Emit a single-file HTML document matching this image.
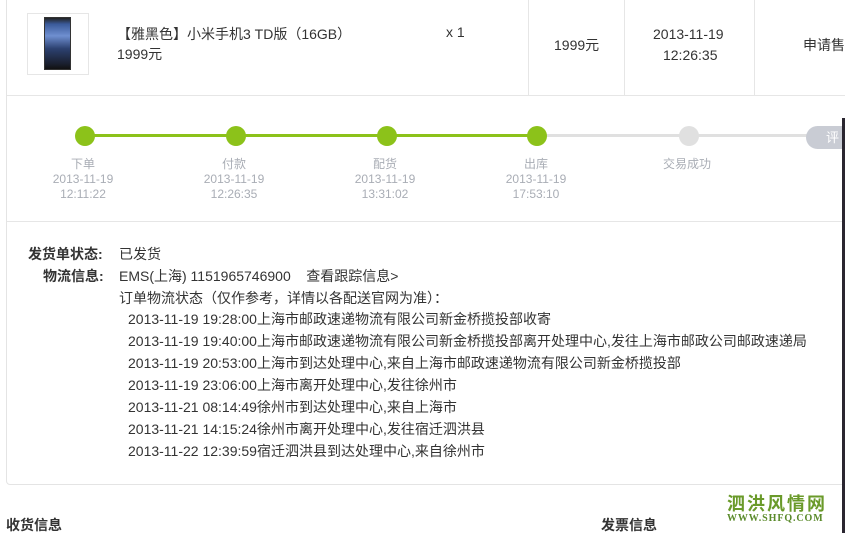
<!DOCTYPE html>
<html><head><meta charset="utf-8"><style>
*{margin:0;padding:0;box-sizing:border-box}
body{width:845px;height:533px;overflow:hidden;background:#fff;font-family:"Liberation Sans","Noto Sans CJK SC",sans-serif;font-size:14px;color:#333;position:relative}
.a{position:absolute;white-space:nowrap}
.panel{position:absolute;left:6px;top:-5px;width:850px;height:490px;border:1px solid #e4e4e4;border-radius:4px}
.hl{position:absolute;height:1px;background:#e6e6e6}
.vl{position:absolute;width:1px;background:#e6e6e6}
.dot{position:absolute;width:20px;height:20px;border-radius:50%;background:#8cc21a}
.tl{position:absolute;text-align:center;color:#a9adb5;font-size:12px;line-height:15px;width:100px}
.log{position:absolute;left:128px;font-size:14px;line-height:22px;color:#333}
</style></head><body>
<div class="panel"></div>
<div class="hl" style="left:7px;top:95px;width:840px"></div>
<div class="hl" style="left:7px;top:221px;width:840px"></div>
<div class="vl" style="left:528px;top:0;height:95px"></div>
<div class="vl" style="left:624px;top:0;height:95px"></div>
<div class="vl" style="left:754px;top:0;height:95px"></div>
<div class="a" style="left:27px;top:13px;width:62px;height:62px;border:1px solid #e6e6e6"></div>
<div class="a" style="left:44px;top:17px;width:27px;height:53px;background:linear-gradient(#222 0,#3a5a9a 12%,#6f8fd0 35%,#2c4170 60%,#1a1f2e 90%,#111);border:1px solid #333"></div>
<div class="a" style="left:117px;top:24px">【雅黑色】小米手机3 TD版（16GB）</div>
<div class="a" style="left:117px;top:44px">1999元</div>
<div class="a" style="left:446px;top:24px">x 1</div>
<div class="a" style="left:554px;top:35px">1999元</div>
<div class="a" style="left:653px;top:24px;text-align:center;line-height:21px">2013-11-19<br>&nbsp;12:26:35</div>
<div class="a" style="left:803px;top:35px">申请售</div>
<div class="a" style="left:85px;top:134px;width:452px;height:3px;background:#8cc21a"></div>
<div class="a" style="left:537px;top:134px;width:280px;height:3px;background:#e0e0e0"></div>
<div class="dot" style="left:75px;top:126px"></div>
<div class="dot" style="left:226px;top:126px"></div>
<div class="dot" style="left:377px;top:126px"></div>
<div class="dot" style="left:527px;top:126px"></div>
<div class="dot" style="left:679px;top:126px;background:#e0e0e0"></div>
<div class="a" style="left:806px;top:126px;width:50px;height:23px;border-radius:12px;background:#c9ccd4;color:#fff;font-size:13px;line-height:23px;padding-left:20px">评</div>
<div class="a" style="left:842px;top:118px;width:3px;height:415px;background:#2a2630"></div>
<div class="tl" style="left:33px;top:157px">下单<br>2013-11-19<br>12:11:22</div>
<div class="tl" style="left:184px;top:157px">付款<br>2013-11-19<br>12:26:35</div>
<div class="tl" style="left:335px;top:157px">配货<br>2013-11-19<br>13:31:02</div>
<div class="tl" style="left:486px;top:157px">出库<br>2013-11-19<br>17:53:10</div>
<div class="tl" style="left:637px;top:157px">交易成功</div>
<div class="a" style="left:28px;top:244px;font-weight:bold">发货单状态:</div>
<div class="a" style="left:119px;top:244px">已发货</div>
<div class="a" style="left:43px;top:266px;font-weight:bold">物流信息:</div>
<div class="a" style="left:119px;top:266px">EMS(上海) 1151965746900 &nbsp;&nbsp; 查看跟踪信息&gt;</div>
<div class="a" style="left:119px;top:288px">订单物流状态（仅作参考，详情以各配送官网为准）：</div>
<div class="log" style="top:308px">2013-11-19 19:28:00上海市邮政速递物流有限公司新金桥揽投部收寄<br>2013-11-19 19:40:00上海市邮政速递物流有限公司新金桥揽投部离开处理中心,发往上海市邮政公司邮政速递局<br>2013-11-19 20:53:00上海市到达处理中心,来自上海市邮政速递物流有限公司新金桥揽投部<br>2013-11-19 23:06:00上海市离开处理中心,发往徐州市<br>2013-11-21 08:14:49徐州市到达处理中心,来自上海市<br>2013-11-21 14:15:24徐州市离开处理中心,发往宿迁泗洪县<br>2013-11-22 12:39:59宿迁泗洪县到达处理中心,来自徐州市</div>
<div class="a" style="left:6px;top:515px;font-size:14px;font-weight:bold">收货信息</div>
<div class="a" style="left:601px;top:515px;font-size:14px;font-weight:bold">发票信息</div>
<div class="a" style="left:727px;top:490px;font-size:18px;font-weight:bold;color:#6a9a2a;letter-spacing:2px;font-family:'Noto Sans CJK SC',sans-serif">泗洪风情网</div>
<div class="a" style="left:727px;top:513px;font-size:10px;font-weight:bold;color:#5a8a2a;letter-spacing:0.9px;font-family:'Liberation Serif',serif">WWW.SHFQ.COM</div>
</body></html>
